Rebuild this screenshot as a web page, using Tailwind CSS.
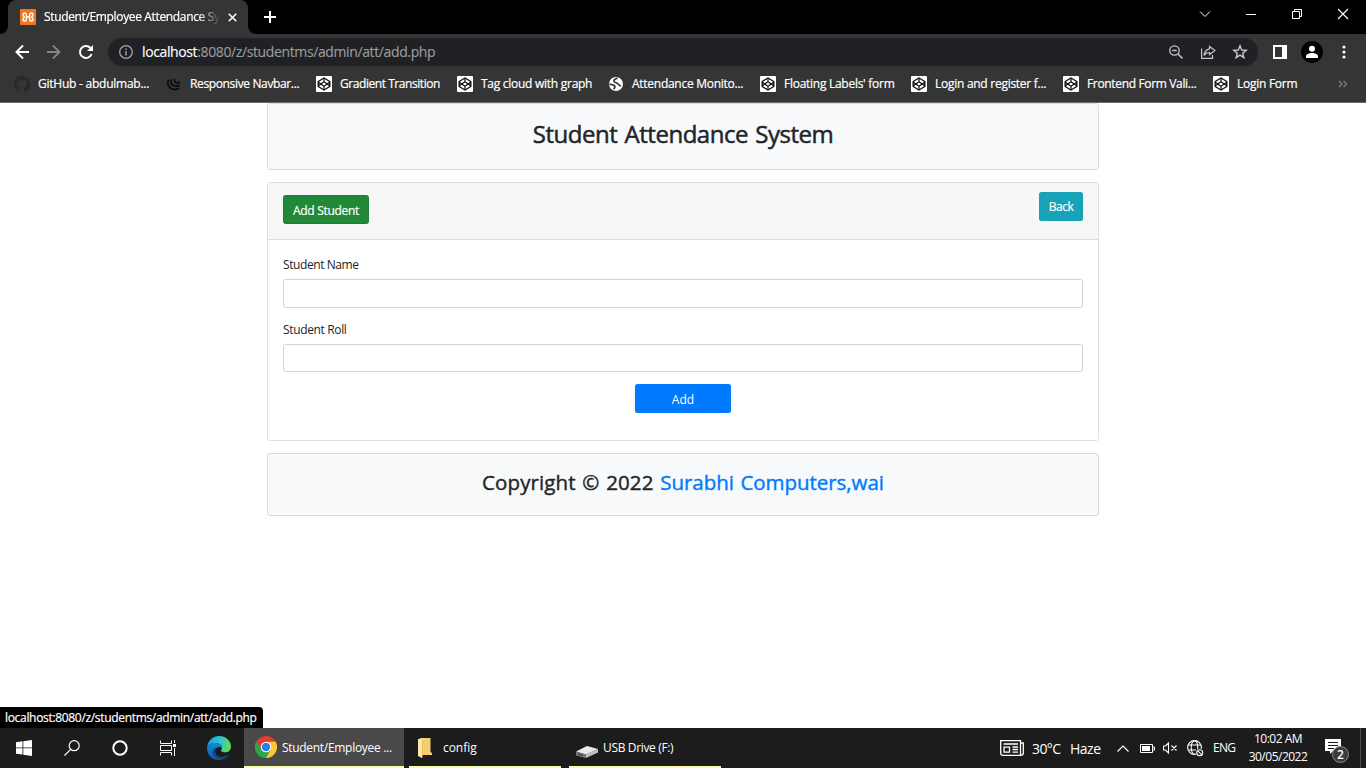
<!DOCTYPE html>
<html lang="en">
<head>
<meta charset="utf-8">
<title>Student/Employee Attendance System</title>
<script src="https://cdn.jsdelivr.net/npm/@tailwindcss/browser@4"></script>
</head>
<body class="w-[1366px] h-[768px] overflow-hidden flex flex-col bg-white font-['Open_Sans','Noto_Sans',sans-serif] text-xs text-[#212529]">

<svg class="hidden" aria-hidden="true">
  <symbol id="codepen" viewBox="0 0 16 16">
    <rect width="16" height="16" rx="1" fill="#fff"/>
    <path d="M8 2 13.800 5.500V10.500L8 14 2.200 10.500V5.500Z" fill="none" stroke="#111" stroke-width="1.400" stroke-linejoin="round"/>
    <path d="M8 5.700 11.300 8 8 10.300 4.700 8ZM8 2V5.700M8 10.300V14M2.200 6 4.700 8 2.200 10M13.800 6 11.300 8 13.800 10" fill="none" stroke="#111" stroke-width="1.200" stroke-linejoin="round"/>
  </symbol>
</svg>

<!-- Tab strip -->
<header class="h-[34px] shrink-0 bg-black flex text-white">
  <div class="w-2 flex items-end"><div class="w-2 h-2 bg-[#353535]"><div class="size-2 bg-black rounded-br-lg"></div></div></div>
  <div class="w-60 bg-[#353535] rounded-t-lg flex items-center pl-3">
    <svg class="size-4 shrink-0" viewBox="0 0 16 16"><rect width="16" height="16" rx="1" fill="#f37623"/><path d="M6.300 5.800C6.300 4.500 5.600 4 4.800 4 3.600 4 3 4.800 3 5.800 3 7 3.800 7.500 4.500 8 3.800 8.500 3 9 3 10.200 3 11.200 3.600 12 4.800 12 5.600 12 6.300 11.500 6.300 10.200M9.700 5.800C9.700 4.500 10.400 4 11.200 4 12.400 4 13 4.800 13 5.800 13 7 12.200 7.500 11.500 8 12.200 8.500 13 9 13 10.200 13 11.200 12.400 12 11.200 12 10.400 12 9.700 11.500 9.700 10.200M6.300 5.500V6.500L7 8 6.300 9.500V10.500M9.700 5.500V6.500L9 8 9.700 9.500V10.500M6.500 8H9.500" fill="none" stroke="#fff" stroke-width="1.400"/></svg>
    <div class="ml-2 w-[176px] whitespace-nowrap tracking-[-0.35px] [-webkit-text-stroke:0.2px] mask-r-from-88% mask-r-to-100%">Student/Employee Attendance Sy</div>
    <svg class="size-[9px] ml-2 shrink-0" viewBox="0 0 9 9"><path d="M.7.7 8.300 8.300M8.300.7.7 8.300" stroke="#fff" stroke-width="1.500"/></svg>
  </div>
  <div class="w-2 flex items-end"><div class="size-2 bg-[#353535]"><div class="size-2 bg-black rounded-bl-lg"></div></div></div>
  <svg class="size-3 ml-2 mt-[11px]" viewBox="0 0 12 12"><path d="M6 0V12M0 6H12" stroke="#fff" stroke-width="2"/></svg>
  <div class="ml-auto flex items-start pt-2 pr-[17px] gap-[34px]">
    <svg class="size-3" viewBox="0 0 12 12"><path d="M1 3.500 6 8.500 11 3.500" fill="none" stroke="#fff"/></svg>
    <svg class="size-3" viewBox="0 0 12 12"><path d="M1 6.500H11" stroke="#fff"/></svg>
    <svg class="size-3" viewBox="0 0 12 12"><path d="M1.500 3.500H8.500V10.500H1.500ZM3.500 3.500V1.500H10.500V8.500H8.500" fill="none" stroke="#fff"/></svg>
    <svg class="size-3" viewBox="0 0 12 12"><path d="M1 1 11 11M11 1 1 11" stroke="#fff" stroke-width="1.100"/></svg>
  </div>
</header>

<!-- Toolbar -->
<div class="h-9 shrink-0 bg-[#353535] flex items-center text-white">
  <svg class="w-[14px] h-4 ml-[15px]" viewBox="0 0 14 16"><path d="M14 8H1.500M8 1.500 1.500 8 8 14.500" fill="none" stroke="#fff" stroke-width="2"/></svg>
  <svg class="w-[14px] h-4 ml-[18px]" viewBox="0 0 14 16"><path d="M0 8H12.500M6 1.500 12.500 8 6 14.500" fill="none" stroke="#868686" stroke-width="1.800"/></svg>
  <svg class="size-4 ml-[17px]" viewBox="0 0 16 16"><path d="M13.600 10A6 6 0 1 1 12.300 3.800" fill="none" stroke="#fff" stroke-width="2"/><path d="M15 1V7H9Z" fill="#fff"/></svg>
  <div class="ml-[14px] w-[1150px] h-7 rounded-full bg-[#202124] flex items-center pl-[11px] pr-[10px]">
    <svg class="size-[14px]" viewBox="0 0 14 14"><circle cx="7" cy="7" r="6.300" fill="none" stroke="#a4a5a7" stroke-width="1.300"/><path d="M7 6V10.500M7 3.500V5" stroke="#a4a5a7" stroke-width="1.400"/></svg>
    <div class="ml-[9px] text-sm whitespace-nowrap tracking-[-0.38px] [-webkit-text-stroke:0.15px] text-[#9a9b9d]"><span class="text-white">localhost</span>:8080/z/studentms/admin/att/add.php</div>
    <svg class="ml-auto size-4" viewBox="0 0 16 16" fill="none" stroke="#c7c7c8" stroke-width="1.300"><circle cx="6.500" cy="6.500" r="4.700"/><path d="M10 10 14.500 14.500M4.300 6.500H8.700" stroke-width="1.500"/></svg>
    <svg class="ml-4 size-4" viewBox="0 0 16 16" fill="none" stroke="#c7c7c8" stroke-width="1.200"><path d="M1.600 4.500V14.400H12.500V11M9.500 2.500 15 6.500 9.500 10.500V8.500C7 8.500 5.200 9.300 4 11.500 4.500 7.500 6.500 5.300 9.500 4.800Z"/></svg>
    <svg class="ml-4 size-4" viewBox="0 0 16 16" fill="none" stroke="#c7c7c8" stroke-width="1.400"><path d="M8 1.800 9.700 6 14.200 6.300 10.700 9.200 11.900 13.700 8 11.200 4.100 13.700 5.300 9.200 1.800 6.300 6.300 6Z"/></svg>
  </div>
  <svg class="ml-[15px] size-[14px]" viewBox="0 0 14 14"><path d="M1 1H13V13H1Z" fill="none" stroke="#fff" stroke-width="2"/><path d="M9 0H14V14H9Z" fill="#fff"/></svg>
  <svg class="ml-[14px] size-[22px]" viewBox="0 0 22 22"><circle cx="11" cy="11" r="11" fill="#000"/><circle cx="11" cy="7.800" r="3" fill="#fff"/><path d="M5 17V15.500C5 13.300 8 12 11 12S17 13.300 17 15.500V17Z" fill="#fff"/></svg>
  <svg class="ml-[19px] w-1 h-[14px]" viewBox="0 0 4 14" fill="#fff"><circle cx="2" cy="2" r="1.600"/><circle cx="2" cy="7" r="1.600"/><circle cx="2" cy="12" r="1.600"/></svg>
</div>

<!-- Bookmarks bar -->
<nav class="h-[33px] shrink-0 bg-[#353535] border-b border-[#6b6b6b] pl-[14px] pb-1 flex items-center text-white whitespace-nowrap tracking-[-0.27px] [-webkit-text-stroke:0.2px]">
  <div class="w-[152px] flex items-center gap-2"><svg class="size-4" viewBox="0 0 16 16"><path fill="#24292e" d="M8 0C3.580 0 0 3.580 0 8c0 3.540 2.290 6.530 5.470 7.590.4.070.55-.17.55-.38 0-.19-.01-.82-.01-1.490-2.010.37-2.530-.49-2.690-.94-.09-.23-.48-.94-.82-1.130-.28-.15-.68-.52-.01-.53.63-.01 1.080.58 1.230.82.72 1.210 1.870.87 2.330.66.070-.52.28-.87.51-1.070-1.780-.2-3.640-.89-3.640-3.950 0-.87.31-1.590.82-2.150-.08-.2-.36-1.020.08-2.120 0 0 .67-.21 2.200.82a7.500 7.500 0 0 1 4 0c1.530-1.040 2.200-.82 2.200-.82.44 1.100.16 1.920.08 2.120.51.56.82 1.270.82 2.150 0 3.070-1.870 3.750-3.650 3.950.29.25.54.73.54 1.480 0 1.070-.01 1.930-.01 2.200 0 .21.15.46.55.38A8 8 0 0 0 16 8c0-4.420-3.580-8-8-8Z"/></svg><span class="tracking-[-0.24px]">GitHub - abdulmab...</span></div>
  <div class="w-[150px] flex items-center gap-2"><svg class="size-4" viewBox="0 0 16 16" fill="none" stroke="#080808" stroke-width="1.600"><path d="M2.600 4C.9 7 2 11 5.500 12.700 8.500 14 11.500 13.300 13.300 11.800M5.500 3C4.300 5.500 5 8.200 7.500 9.500 9.800 10.600 12 10.200 13.500 8.800M8.700 3C8 4.500 8.800 6 10.300 6.700 11.800 7.300 13 6.800 13.800 6"/></svg><span class="tracking-[-0.36px]">Responsive Navbar...</span></div>
  <div class="w-[141px] flex items-center gap-2"><svg class="size-4"><use href="#codepen"/></svg><span class="tracking-[-0.44px]">Gradient Transition</span></div>
  <div class="w-[151px] flex items-center gap-2"><svg class="size-4"><use href="#codepen"/></svg><span>Tag cloud with graph</span></div>
  <div class="w-[152px] flex items-center gap-2"><svg class="size-4" viewBox="0 0 16 16"><circle cx="8" cy="8" r="7" fill="#fff"/><path d="M9.500 2C6.500 3.200 5.500 4 6 5.300S9.500 6.800 10 8 12.500 9 12.500 10.500M1.500 8.500C4 8 5.500 9 6.500 9.800S6.500 12 5.500 13" fill="none" stroke="#353535" stroke-width="1.800"/></svg><span>Attendance Monito...</span></div>
  <div class="w-[151px] flex items-center gap-2"><svg class="size-4"><use href="#codepen"/></svg><span>Floating Labels' form</span></div>
  <div class="w-[152px] flex items-center gap-2"><svg class="size-4"><use href="#codepen"/></svg><span>Login and register f...</span></div>
  <div class="w-[150px] flex items-center gap-2"><svg class="size-4"><use href="#codepen"/></svg><span class="tracking-[-0.34px]">Frontend Form Vali...</span></div>
  <div class="flex items-center gap-2"><svg class="size-4"><use href="#codepen"/></svg><span>Login Form</span></div>
  <svg class="ml-auto mr-[18px] w-[10px] h-2" viewBox="0 0 10 8"><path d="M1 1 4 4 1 7M5.500 1 8.500 4 5.500 7" fill="none" stroke="#77787a" stroke-width="1.500"/></svg>
</nav>

<!-- Page -->
<main class="relative flex-1 flex flex-col items-center">
  <section class="w-[832px] h-[67px] rounded-[3px] border border-[#dadcdf] bg-[#f8f9fb] flex justify-center pt-[13px]">
    <h1 class="text-[24px] leading-[34px] font-medium whitespace-nowrap tracking-[-0.48px] [word-spacing:1.500px] [-webkit-text-stroke:0.5px]">Student Attendance System</h1>
  </section>

  <section class="mt-3 w-[832px] h-[259px] rounded-[3px] border border-[#dfdfdf]">
    <div class="h-[57px] bg-[#f7f7f7] border-b border-[#dadbdc] px-[15px] flex justify-between items-start text-white">
      <button class="mt-3 w-[86px] h-[29px] rounded-[2.500px] border border-[#1e7e34] bg-[#218838] pt-0.5 tracking-[-0.3px] [-webkit-text-stroke:0.2px]">Add Student</button>
      <button class="mt-[9px] w-11 h-[29px] rounded-[2.500px] bg-[#17a2b8] tracking-[-0.55px] [-webkit-text-stroke:0.2px]">Back</button>
    </div>
    <form class="px-[15px] pt-4 flex flex-col">
      <label class="h-[23px] leading-[18px] tracking-[-0.42px]">Student Name</label>
      <input class="h-[29px] rounded-[2.500px] border border-[#ced4da]">
      <label class="mt-[13px] h-[23px] leading-[18px] tracking-[-0.35px]">Student Roll</label>
      <input class="h-[28px] rounded-[2.500px] border border-[#ced4da]">
      <button type="button" class="mt-3 self-center w-24 h-[29px] rounded-[2.500px] bg-[#007bff] text-white pt-0.5">Add</button>
    </form>
  </section>

  <section class="mt-3 w-[832px] h-[63px] rounded-[3px] border border-[#d8dadd] bg-[#f8f9fb] flex justify-center pt-3">
    <h2 class="text-[20.500px] leading-[32px] font-medium whitespace-nowrap tracking-[-0.04px] [word-spacing:1.300px] [-webkit-text-stroke:0.4px]"><span class="tracking-[0.1px]">Copyright © 2022 </span><a class="text-[#007bff]">Surabhi Computers,wai</a></h2>
  </section>

  <div class="absolute left-0 bottom-0 w-[263px] h-[21px] rounded-tr bg-black text-white pl-[5px] leading-[21px] whitespace-nowrap tracking-[-0.32px] [-webkit-text-stroke:0.2px]">localhost:8080/z/studentms/admin/att/add.php</div>
</main>

<!-- Taskbar -->
<footer class="h-10 shrink-0 bg-[#1c1c1c] flex items-center text-white whitespace-nowrap">
  <svg class="ml-4 size-4" viewBox="0 0 16 16" fill="#fff"><path d="M0 2.300 6.500 1.300V7.500H0ZM7.300 1.200 16 0V7.500H7.300ZM0 8.300H6.500V14.600L0 13.700ZM7.300 8.300H16V16L7.300 14.800Z"/></svg>
  <svg class="ml-8 size-4" viewBox="0 0 16 16" fill="none" stroke="#fff" stroke-width="1.200"><circle cx="10.200" cy="5.700" r="5"/><path d="M6.700 9.300.5 15.500"/></svg>
  <svg class="ml-8 size-4" viewBox="0 0 16 16"><circle cx="8" cy="8" r="6.700" fill="none" stroke="#fff" stroke-width="2"/></svg>
  <svg class="ml-8 size-4" viewBox="0 0 16 16" fill="none" stroke="#fff"><path d="M.5.5V3.500H11.500V.5M.5 5.500H11.500V10.500H.5ZM.5 15.500V12.500H11.500V15.500M14.500 0V3M14.500 8V16"/><path d="M13 4H16V7H13Z" fill="#fff" stroke="none"/></svg>
  <svg class="ml-[31px] size-6" viewBox="0 0 24 24">
    <defs><linearGradient id="eg" x1="0" x2="1" y1=".3" y2=".5"><stop stop-color="#1c9fe0"/><stop offset=".5" stop-color="#2bc3d2"/><stop offset="1" stop-color="#66dc4c"/></linearGradient><linearGradient id="eb" x1="0" x2="0" y1="0" y2="1"><stop stop-color="#1688d8"/><stop offset="1" stop-color="#0d59ac"/></linearGradient></defs>
    <path d="M.2 11C1 4.500 6 0 12 0 19 0 24 5 24 10.500 24 14 21.500 16.300 18.500 16.300 15.800 16.300 14 15.500 14 14.500 14 13.800 15 13.500 15 11.800 15 9.500 12.500 7 8.500 7 4.500 7 1.500 8.500.2 11Z" fill="url(#eg)"/>
    <path d="M.1 11.500C1 8.500 4.500 7 8 7 12 7 15 9.300 15 12 11.500 9.500 8 12 8 15.500 8 20 12 23 15 23.600 7 25.500-.5 20 .1 11.500Z" fill="url(#eb)"/>
    <path d="M9.300 11.500C7.500 13 7.500 17 10 19.500 13 22 18 21 22 18.300 20 21.500 17.500 23.300 14.500 23.700 8.500 23 5.500 19.500 5.500 16 5.500 13.500 7.500 12 9.300 11.500Z" fill="#114a8b"/>
  </svg>
  <div class="ml-[13px] w-40 h-full bg-[#494949] border-b-2 border-[#fbfbae] flex items-center pl-[11px]">
    <svg class="size-[22px] shrink-0" viewBox="0 0 22 22"><path d="M11 11 1.470 5.500A11 11 0 0 1 20.530 5.500Z" fill="#e33b2e"/><path d="M11 11 20.530 5.500A11 11 0 0 1 11 22Z" fill="#fcc934"/><path d="M11 11V22A11 11 0 0 1 1.470 5.500Z" fill="#2da44e"/><path d="M11 5.500H20.530L15.800 13.500 11 22 9.500 15Z" fill="#fcc934"/><path d="M1.470 5.500 6.200 13.500 11 16.500 15.800 13.500 11 22A11 11 0 0 1 1.470 5.500Z" fill="#2da44e"/><path d="M1.470 5.500H20.530L11 6.500 6.500 10V13.800Z" fill="#e33b2e"/><circle cx="11" cy="11" r="5.300" fill="#fff"/><circle cx="11" cy="11" r="4.200" fill="#2e7de9"/></svg>
    <span class="ml-[5px] pt-0.5 tracking-[-0.3px]">Student/Employee ...</span>
  </div>
  <div class="ml-[5px] w-[152px] h-full border-b-2 border-[#fbfbae] flex items-center pl-[9px]">
    <svg class="w-[14px] h-5 mt-0.5" viewBox="0 0 14 20"><path d="M3 0H12.500V14L14 15V17H3Z" fill="#f4cf6e"/><path d="M0 1 4.500 0V16.500L4 20 0 18Z" fill="#ffe7a1"/><path d="M4.500 2V17L4 20" fill="none" stroke="#d9ad4b" stroke-width=".6"/></svg>
    <span class="ml-[11px] pt-0.5 tracking-[-0.05px]">config</span>
  </div>
  <div class="ml-2 w-[152px] h-full border-b-2 border-[#fbfbae] flex items-center pl-[7px]">
    <svg class="w-[22px] h-3 mt-2.5" viewBox="0 0 22 12"><path d="M0 5.500 11 0 22 3 10 8.500Z" fill="#e9e9e9"/><path d="M0 5.500 10 8.500V12L0 9.500Z" fill="#777"/><path d="M10 8.500 22 3V6.500L10 12Z" fill="#bfbfbf"/><path d="M2 7.500 8 9.300V10.200L2 8.500Z" fill="#333"/><path d="M7 9H8.500V10.500H7Z" fill="#51ad5b"/></svg>
    <span class="ml-[5px] pt-0.5 tracking-[-0.35px]">USB Drive (F:)</span>
  </div>
  <div class="ml-auto h-full flex items-center">
    <svg class="w-6 h-4" viewBox="0 0 24 16" fill="none" stroke="#fff" stroke-width="1.300"><path d="M.7.7H20.500V15.300H3Q.7 15.300.7 13ZM20.500 3H23.300V13Q23.300 15.300 20.500 15.300M3.500 4H18M12.500 7H18M12.500 9.500H18M12.500 12.200H18M4 7.200H9.500V12.200H4Z"/></svg>
    <span class="ml-2 pt-0.5 text-[14px] tracking-[-0.6px] w-[38px]">30°C</span>
    <span class="text-[14px] pt-0.5 tracking-[-0.5px] w-[31px]">Haze</span>
    <svg class="ml-4 w-3 h-[7px]" viewBox="0 0 12 7"><path d="M.5 6.500 6 1 11.500 6.500" fill="none" stroke="#fff" stroke-width="1.200"/></svg>
    <svg class="ml-[11px] w-[15px] h-[9px]" viewBox="0 0 15 9"><path d="M.5.5H12.500V8.500H.5ZM13 3H14.500V6H13" fill="none" stroke="#fff"/><path d="M2 2H10V7H2Z" fill="#fff"/></svg>
    <svg class="ml-2 w-[15px] h-3" viewBox="0 0 15 12" fill="none" stroke="#fff" stroke-width="1.100"><path d="M.5 4V8H2.500L5.500 11V1L2.500 4ZM8.500 3.500 13.500 8.500M13.500 3.500 8.500 8.500"/></svg>
    <svg class="ml-[9px] size-[17px]" viewBox="0 0 17 17" fill="none" stroke="#fff" stroke-width="1.100"><circle cx="7.500" cy="7.500" r="6.900"/><ellipse cx="7.500" cy="7.500" rx="3.300" ry="6.900"/><path d="M1.200 5H13.800M1.200 10H9"/><circle cx="12.700" cy="12.700" r="4.300" fill="#1c1c1c" stroke="none"/><circle cx="12.700" cy="12.700" r="3"/><path d="M10.600 10.600 14.800 14.800"/></svg>
    <span class="ml-[9px] w-6 tracking-[-0.7px]">ENG</span>
    <div class="ml-[11px] w-[60px] text-center leading-[18px] tracking-[-0.5px] flex flex-col items-center"><span>10:02 AM</span><span>30/05/2022</span></div>
    <svg class="ml-[17px] mt-1.5 w-6 h-6" viewBox="0 0 24 24"><path d="M0 0H16V12H8L5 15V12H0Z" fill="#fff"/><path d="M3 3.500H13M3 6.500H13M3 9.500H9" stroke="#1c1c1c"/><circle cx="15.500" cy="15.500" r="8" fill="#3c3c3c" stroke="#8a8a8a"/><text x="15.500" y="19.500" text-anchor="middle" font-size="12" font-weight="600" fill="#fff">2</text></svg>
    <div class="ml-[11px] mr-[5px] w-px h-full bg-[#4d4d4d]"></div>
  </div>
</footer>
</body>
</html>
